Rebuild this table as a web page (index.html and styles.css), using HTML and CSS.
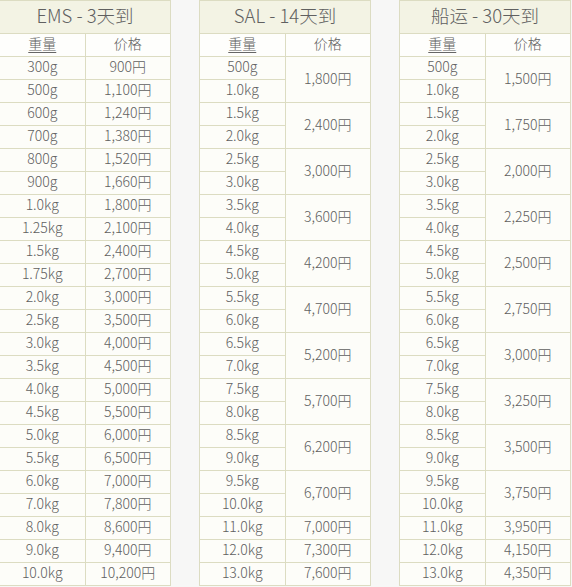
FILE: index.html
```html
<!DOCTYPE html>
<html lang="zh">
<head>
<meta charset="utf-8">
<link rel="stylesheet" href="styles.css">
</head>
<body>
<div class="wrap">
  <table class="rate">
    <tr><th colspan="2" class="title">EMS - 3天到</th></tr>
    <tr class="sub"><td><u>重量</u></td><td>价格</td></tr>
    <tr><td>300g</td><td>900円</td></tr>
    <tr><td>500g</td><td>1,100円</td></tr>
    <tr><td>600g</td><td>1,240円</td></tr>
    <tr><td>700g</td><td>1,380円</td></tr>
    <tr><td>800g</td><td>1,520円</td></tr>
    <tr><td>900g</td><td>1,660円</td></tr>
    <tr><td>1.0kg</td><td>1,800円</td></tr>
    <tr><td>1.25kg</td><td>2,100円</td></tr>
    <tr><td>1.5kg</td><td>2,400円</td></tr>
    <tr><td>1.75kg</td><td>2,700円</td></tr>
    <tr><td>2.0kg</td><td>3,000円</td></tr>
    <tr><td>2.5kg</td><td>3,500円</td></tr>
    <tr><td>3.0kg</td><td>4,000円</td></tr>
    <tr><td>3.5kg</td><td>4,500円</td></tr>
    <tr><td>4.0kg</td><td>5,000円</td></tr>
    <tr><td>4.5kg</td><td>5,500円</td></tr>
    <tr><td>5.0kg</td><td>6,000円</td></tr>
    <tr><td>5.5kg</td><td>6,500円</td></tr>
    <tr><td>6.0kg</td><td>7,000円</td></tr>
    <tr><td>7.0kg</td><td>7,800円</td></tr>
    <tr><td>8.0kg</td><td>8,600円</td></tr>
    <tr><td>9.0kg</td><td>9,400円</td></tr>
    <tr><td>10.0kg</td><td>10,200円</td></tr>
  </table>

  <table class="rate">
    <tr><th colspan="2" class="title">SAL - 14天到</th></tr>
    <tr class="sub"><td><u>重量</u></td><td>价格</td></tr>
    <tr><td>500g</td><td rowspan="2">1,800円</td></tr>
    <tr><td>1.0kg</td></tr>
    <tr><td>1.5kg</td><td rowspan="2">2,400円</td></tr>
    <tr><td>2.0kg</td></tr>
    <tr><td>2.5kg</td><td rowspan="2">3,000円</td></tr>
    <tr><td>3.0kg</td></tr>
    <tr><td>3.5kg</td><td rowspan="2">3,600円</td></tr>
    <tr><td>4.0kg</td></tr>
    <tr><td>4.5kg</td><td rowspan="2">4,200円</td></tr>
    <tr><td>5.0kg</td></tr>
    <tr><td>5.5kg</td><td rowspan="2">4,700円</td></tr>
    <tr><td>6.0kg</td></tr>
    <tr><td>6.5kg</td><td rowspan="2">5,200円</td></tr>
    <tr><td>7.0kg</td></tr>
    <tr><td>7.5kg</td><td rowspan="2">5,700円</td></tr>
    <tr><td>8.0kg</td></tr>
    <tr><td>8.5kg</td><td rowspan="2">6,200円</td></tr>
    <tr><td>9.0kg</td></tr>
    <tr><td>9.5kg</td><td rowspan="2">6,700円</td></tr>
    <tr><td>10.0kg</td></tr>
    <tr><td>11.0kg</td><td>7,000円</td></tr>
    <tr><td>12.0kg</td><td>7,300円</td></tr>
    <tr><td>13.0kg</td><td>7,600円</td></tr>
  </table>

  <table class="rate">
    <tr><th colspan="2" class="title">船运 - 30天到</th></tr>
    <tr class="sub"><td><u>重量</u></td><td>价格</td></tr>
    <tr><td>500g</td><td rowspan="2">1,500円</td></tr>
    <tr><td>1.0kg</td></tr>
    <tr><td>1.5kg</td><td rowspan="2">1,750円</td></tr>
    <tr><td>2.0kg</td></tr>
    <tr><td>2.5kg</td><td rowspan="2">2,000円</td></tr>
    <tr><td>3.0kg</td></tr>
    <tr><td>3.5kg</td><td rowspan="2">2,250円</td></tr>
    <tr><td>4.0kg</td></tr>
    <tr><td>4.5kg</td><td rowspan="2">2,500円</td></tr>
    <tr><td>5.0kg</td></tr>
    <tr><td>5.5kg</td><td rowspan="2">2,750円</td></tr>
    <tr><td>6.0kg</td></tr>
    <tr><td>6.5kg</td><td rowspan="2">3,000円</td></tr>
    <tr><td>7.0kg</td></tr>
    <tr><td>7.5kg</td><td rowspan="2">3,250円</td></tr>
    <tr><td>8.0kg</td></tr>
    <tr><td>8.5kg</td><td rowspan="2">3,500円</td></tr>
    <tr><td>9.0kg</td></tr>
    <tr><td>9.5kg</td><td rowspan="2">3,750円</td></tr>
    <tr><td>10.0kg</td></tr>
    <tr><td>11.0kg</td><td>3,950円</td></tr>
    <tr><td>12.0kg</td><td>4,150円</td></tr>
    <tr><td>13.0kg</td><td>4,350円</td></tr>
  </table>
</div>
</body>
</html>
```

FILE: styles.css
```css
html, body {
  margin: 0;
  padding: 0;
  background: #f7f7f6;
}
.wrap {
  display: flex;
  gap: 28px;
  margin-left: -1px;
}
.rate {
  border-collapse: collapse;
  width: 172px;
  table-layout: fixed;
  font-family: "Noto Sans CJK SC", "Noto Sans", sans-serif;
  font-weight: 300;
  color: #606060;
  background: #fdfdf9;
}
.rate td, .rate th {
  border: 1px solid #dcdcc2;
  text-align: center;
  padding: 0 0 4px;
  height: 18px;
  font-size: 14px;
  line-height: 18px;
  font-weight: 300;
}
.rate td:first-child { width: 86px; }
.rate .title {
  height: 28px;
  padding: 0 0 4px;
  font-size: 18.5px;
  background: #f3f3e4;
  line-height: 28px;
}
.rate .sub td {
  background: #fefefc;
}
.rate u {
  text-decoration: underline;
  text-decoration-color: #666;
  text-decoration-thickness: 1px;
  text-underline-offset: 3px;
}
```
